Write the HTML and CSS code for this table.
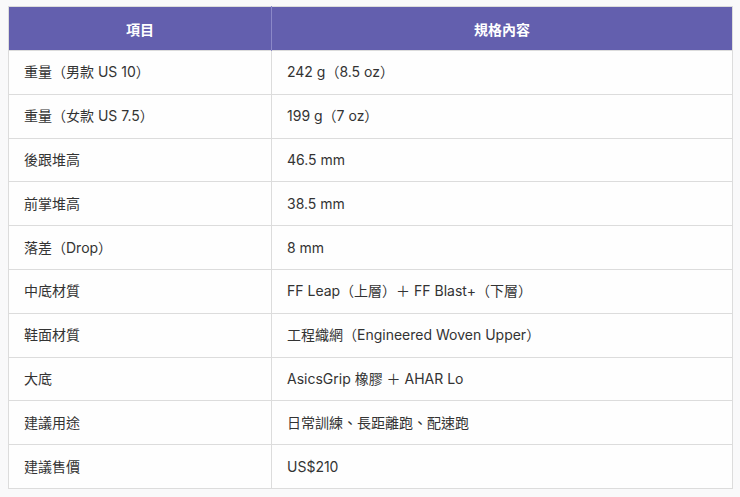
FILE: index.html
```html
<!DOCTYPE html>
<html lang="zh-Hant">
<head>
<meta charset="utf-8">
<link rel="stylesheet" href="styles.css">
</head>
<body>
<table class="spec">
  <thead>
    <tr><th class="col-a">項目</th><th>規格內容</th></tr>
  </thead>
  <tbody>
    <tr><td>重量（男款 US 10）</td><td>242 g（8.5 oz）</td></tr>
    <tr><td>重量（女款 US 7.5）</td><td>199 g（7 oz）</td></tr>
    <tr><td>後跟堆高</td><td>46.5 mm</td></tr>
    <tr><td>前掌堆高</td><td>38.5 mm</td></tr>
    <tr><td>落差（Drop）</td><td>8 mm</td></tr>
    <tr><td>中底材質</td><td>FF Leap（上層）＋ FF Blast+（下層）</td></tr>
    <tr><td>鞋面材質</td><td>工程織網（Engineered Woven Upper）</td></tr>
    <tr><td>大底</td><td>AsicsGrip 橡膠 ＋ AHAR Lo</td></tr>
    <tr><td>建議用途</td><td>日常訓練、長距離跑、配速跑</td></tr>
    <tr><td>建議售價</td><td>US$210</td></tr>
  </tbody>
</table>
</body>
</html>
```
FILE: styles.css
```css
html, body {
  margin: 0;
  background: #f9f9fa;
}
body {
  padding: 6px 7px 0 8px;
  font-family: Inter, "Noto Sans CJK TC", sans-serif;
  font-size: 14px;
  color: #333;
}
.spec {
  width: 725px;
  border-collapse: collapse;
  background: #fefefe;
  border: 1px solid #dcdcdc;
}
.spec th {
  background: #635fae;
  color: #fff;
  font-weight: 700;
  font-size: 14px;
  height: 43px;
  padding: 0 16px;
  text-align: center;
  border-left: 1px solid #8b88c8;
}
.spec th.col-a {
  width: 230px;
  border-left: none;
}
.spec td {
  height: 42.8px;
  padding: 0 15px;
  border: 1px solid #dcdcdc;
  line-height: 20px;
}
```
